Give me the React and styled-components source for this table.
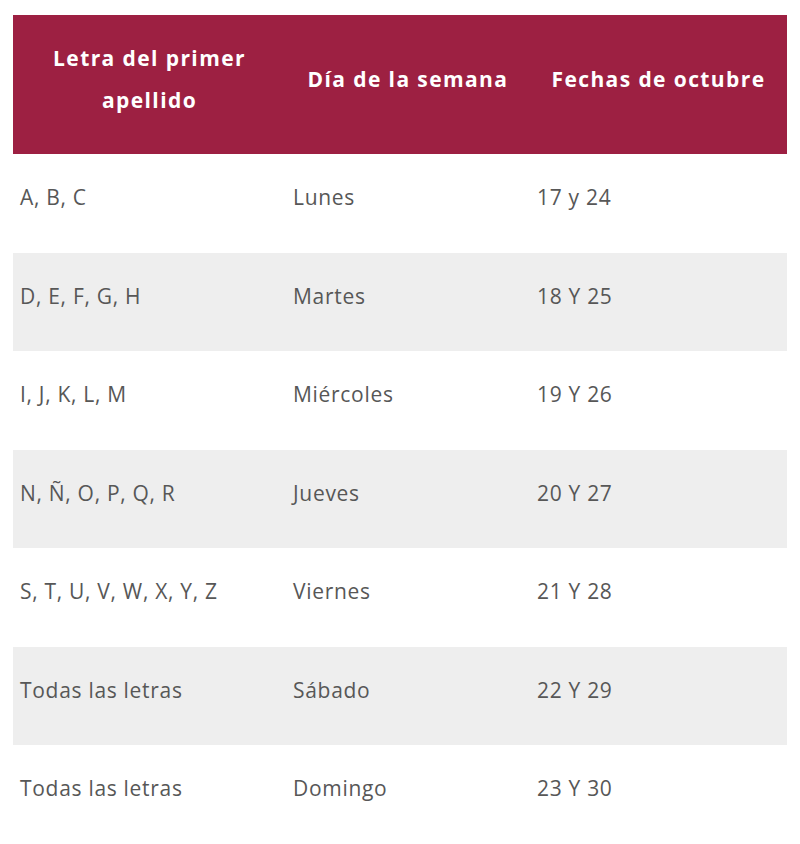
import React from 'react';
import styled, { createGlobalStyle } from 'styled-components';

const GlobalStyle = createGlobalStyle`
  body {
    margin: 0;
    background: #ffffff;
    font-family: "Open Sans", "Liberation Sans", sans-serif;
  }
`;

const rows = [
  ['A, B, C', 'Lunes', '17 y 24'],
  ['D, E, F, G, H', 'Martes', '18 Y 25'],
  ['I, J, K, L, M', 'Miércoles', '19 Y 26'],
  ['N, Ñ, O, P, Q, R', 'Jueves', '20 Y 27'],
  ['S, T, U, V, W, X, Y, Z', 'Viernes', '21 Y 28'],
  ['Todas las letras', 'Sábado', '22 Y 29'],
  ['Todas las letras', 'Domingo', '23 Y 30'],
];

const App = () => {
  return (
    <Page>
      <GlobalStyle />
      <Table>
        <HeadRow>
          <HeadCell>Letra del primer<br />apellido</HeadCell>
          <HeadCell>Día de la semana</HeadCell>
          <HeadCell>Fechas de octubre</HeadCell>
        </HeadRow>
        {rows.map((row, i) => (
          <Row key={i} $striped={i % 2 === 1}>
            {row.map((cell, j) => (
              <Cell key={j}>{cell}</Cell>
            ))}
          </Row>
        ))}
      </Table>
    </Page>
  );
};

export default App;

const Page = styled.div`
  padding: 15px 13px 0 13px;
`;

const Table = styled.div`
  width: 774px;
  display: flex;
  flex-direction: column;
`;

const HeadRow = styled.div`
  display: grid;
  grid-template-columns: 273px 244px 257px;
  height: 139px;
  background-color: #9d2042;
`;

const HeadCell = styled.div`
  display: flex;
  align-items: center;
  justify-content: center;
  text-align: center;
  padding: 0 0 12px 0;
  color: #ffffff;
  font-weight: 700;
  font-size: 21px;
  line-height: 42px;
  letter-spacing: 1.4px;
  white-space: nowrap;
`;

const Row = styled.div`
  display: grid;
  grid-template-columns: 273px 244px 257px;
  height: 98.5px;
  background-color: ${(p) => (p.$striped ? '#eeeeee' : '#ffffff')};
`;

const Cell = styled.div`
  display: flex;
  align-items: center;
  padding: 0 7px 12px 7px;
  color: #575757;
  font-size: 21px;
  line-height: 30px;
  letter-spacing: 0.7px;
`;
